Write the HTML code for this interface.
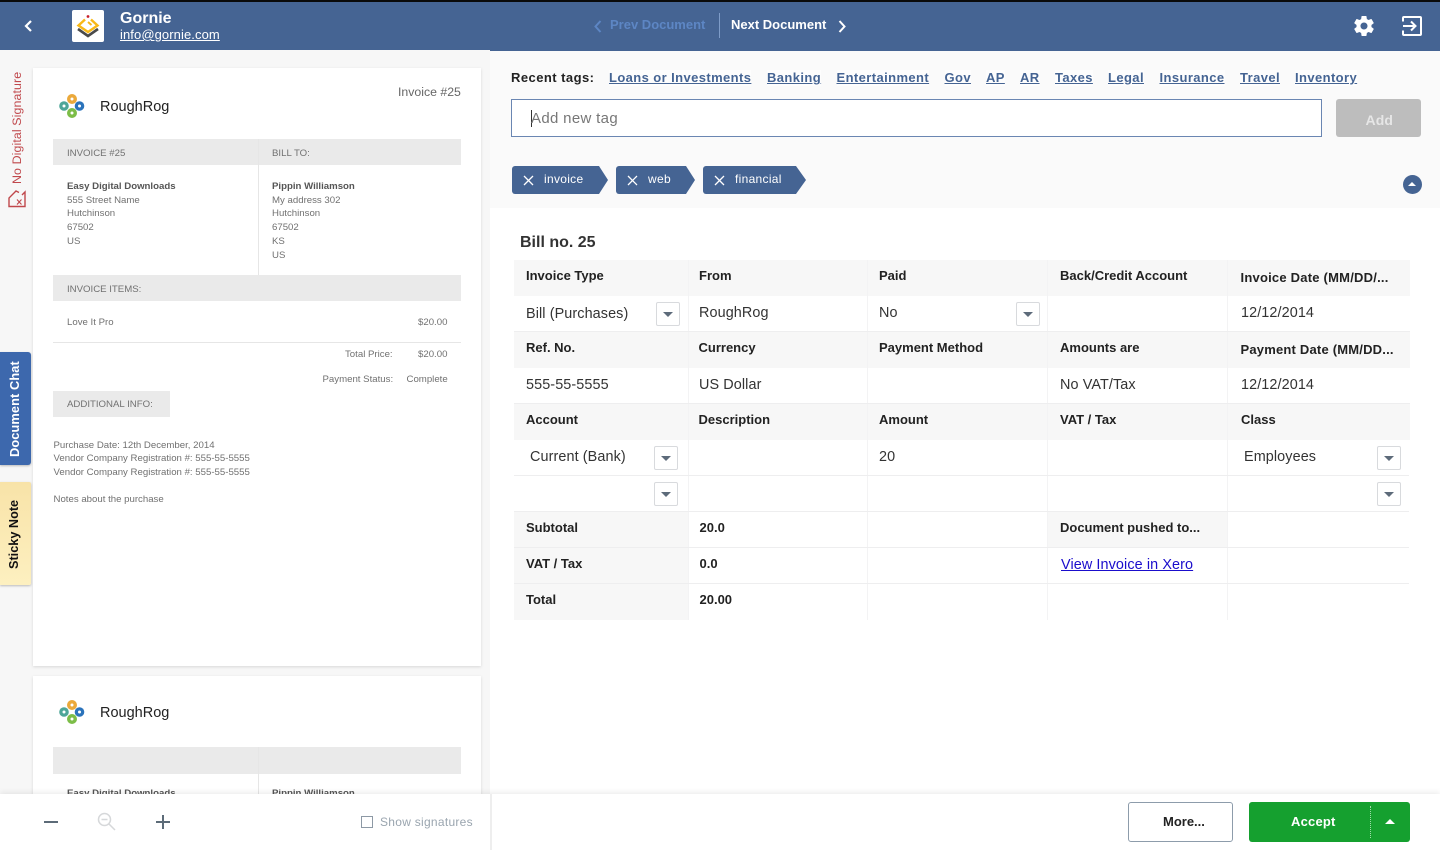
<!DOCTYPE html>
<html><head><meta charset="utf-8"><title>Gornie</title>
<style>
html,body{margin:0;padding:0;width:1440px;height:850px;overflow:hidden;background:#fff;font-family:"Liberation Sans",sans-serif}
div,a,span,svg{position:absolute;white-space:nowrap}
.t{line-height:14px}
.g{background:#eaeaea}
.s{font-size:9.65px;color:#717171;line-height:13.7px}
.s b{color:#555}
.hc{background:#f7f7f7}
.h{font-size:13px;font-weight:bold;color:#222;line-height:16px}
.v{font-size:14.4px;color:#333;line-height:18px;letter-spacing:.1px}
.hl{height:1px;background:#eeeeef}
.vl{width:1px;background:#f3f3f4}
.dd{width:22px;height:22px;border:1px solid #d8dadd;border-radius:2px;background:#fff}
.dd:after{content:"";position:absolute;left:6px;top:9px;border-left:5px solid transparent;border-right:5px solid transparent;border-top:5px solid #5d6b7a}
.rt{font-size:13px;font-weight:bold;color:#456493;text-decoration:underline;top:70px;line-height:16px;letter-spacing:.4px;background:#fdfdfd}
.tag{top:166px;height:28px;background:#456493}
.tag span{color:#fff;font-size:12px;top:6px;line-height:15px;letter-spacing:.3px}
</style></head><body>

<div style="left:0;top:50px;width:490px;height:744px;background:#f7f7f7"></div>
<div style="left:490px;top:50px;width:950px;height:158px;background:#fafafa"></div>

<div style="left:0;top:0;width:1440px;height:51px;background:#456493"></div>
<div style="left:0;top:0;width:1440px;height:2px;background:#0a0a0a"></div>
<div style="left:0;top:50px;width:490px;height:1px;background:#f7f7f7"></div>

<svg style="left:22px;top:19px" width="14" height="14" viewBox="0 0 14 14"><path d="M9 2L4 7l5 5" fill="none" stroke="#fff" stroke-width="2.2"/></svg>

<div style="left:72px;top:10px;width:32px;height:32px;background:#fff;border-radius:2px"></div>
<svg style="left:76px;top:14px" width="24" height="24" viewBox="0 0 24 24">
<circle cx="12" cy="2.5" r="1.4" fill="#c8202a"/>
<path d="M9 5.5L2.5 11.5 12 18l9.500-6.500L15 5.500" fill="none" stroke="#f8b817" stroke-width="2.400"/>
<path d="M12 8l3.500 3" fill="none" stroke="#f8b817" stroke-width="2"/>
<path d="M2 15l10 7 10-7" fill="none" stroke="#4a4a4a" stroke-width="2.600"/>
</svg>
<div class="t" style="left:120px;top:11px;font-size:16px;font-weight:bold;color:#fff;line-height:16px">Gornie</div>
<a style="left:120px;top:27px;font-size:13px;color:#fff;text-decoration:underline;line-height:16px;letter-spacing:.09px">info@gornie.com</a>

<svg style="left:592px;top:19px" width="12" height="14" viewBox="0 0 12 14"><path d="M8.500 2L3.500 7.500 8.500 13" fill="none" stroke="#5d86c4" stroke-width="2"/></svg>
<div style="left:610px;top:17px;font-size:13px;font-weight:bold;color:#5d86c4;line-height:16px">Prev Document</div>
<div style="left:719px;top:13px;width:1px;height:25px;background:#7e9cc8"></div>
<div style="left:731px;top:17px;font-size:13px;font-weight:bold;color:#fff;line-height:16px">Next Document</div>
<svg style="left:836px;top:19px" width="12" height="14" viewBox="0 0 12 14"><path d="M3.500 2L8.500 7.500 3.500 13" fill="none" stroke="#fff" stroke-width="2"/></svg>

<svg style="left:1352px;top:14px" width="24" height="24" viewBox="0 0 24 24"><path fill="#fff" d="M19.430 12.980c.04-.32.070-.64.070-.98s-.03-.66-.07-.98l2.110-1.650c.19-.15.240-.42.120-.64l-2-3.460c-.12-.22-.39-.3-.61-.22l-2.490 1c-.52-.4-1.080-.73-1.690-.98l-.38-2.650C14.460 2.180 14.250 2 14 2h-4c-.25 0-.46.180-.49.420l-.38 2.650c-.61.25-1.170.59-1.690.98l-2.490-1c-.23-.09-.49 0-.61.220l-2 3.460c-.13.220-.07.490.12.640l2.110 1.650c-.04.320-.07.650-.07.980s.03.660.07.980l-2.110 1.650c-.19.150-.24.420-.12.640l2 3.460c.12.220.39.300.61.220l2.490-1c.52.400 1.080.730 1.690.980l.38 2.650c.03.240.24.420.49.420h4c.25 0 .46-.18.490-.42l.38-2.650c.61-.25 1.170-.59 1.690-.98l2.490 1c.23.090.49 0 .61-.22l2-3.460c.12-.22.070-.49-.12-.64l-2.110-1.650zM12 15.500c-1.930 0-3.500-1.570-3.500-3.500s1.570-3.500 3.500-3.500 3.500 1.570 3.500 3.500-1.570 3.500-3.500 3.500z"/></svg>
<svg style="left:1402px;top:16px" width="20" height="20" viewBox="0 0 20 20"><path d="M1 5.500V2a1 1 0 0 1 1-1h16a1 1 0 0 1 1 1v16a1 1 0 0 1-1 1H2a1 1 0 0 1-1-1v-3.500" fill="none" stroke="#fff" stroke-width="2"/><path d="M1 10h12M9 5.500l4.500 4.500L9 14.500" fill="none" stroke="#fff" stroke-width="2"/></svg>

<!-- Left rail -->
<div style="left:10px;top:184px;font-size:12.400px;color:#c0484c;line-height:14px;transform-origin:0 0;transform:rotate(-90deg) translateY(0);letter-spacing:.1px">No Digital Signature</div>
<svg style="left:7px;top:190px" width="20" height="18" viewBox="0 0 20 18"><path d="M12 2.500L9 1 2 8v8.500h16V2l-3 3" fill="none" stroke="#c0484c" stroke-width="1.400"/><path d="M10 9.500l4.500 5M14.500 9.500l-4.500 5" stroke="#c0484c" stroke-width="1.100" fill="none"/></svg>

<div style="left:0;top:352px;width:31px;height:113px;background:#3d68ad;border-radius:0 3px 3px 0;box-shadow:0 1px 2px rgba(0,0,0,.25)"></div>
<div style="left:7px;top:457px;font-size:12.800px;font-weight:bold;color:#fff;line-height:15px;transform-origin:0 0;transform:rotate(-90deg);letter-spacing:.1px">Document Chat</div>
<div style="left:0;top:482px;width:31px;height:103px;background:linear-gradient(#f8e3a8,#fdf0c0);border-radius:0 2px 2px 0;box-shadow:0 1px 2px rgba(0,0,0,.25)"></div>
<div style="left:7px;top:569px;font-size:12.700px;font-weight:bold;color:#111;line-height:15px;transform-origin:0 0;transform:rotate(-90deg)">Sticky Note</div>

<!-- Invoice page 1 -->
<div style="left:33px;top:68px;width:448px;height:598px;background:#fff;box-shadow:0 1px 3px rgba(0,0,0,.13)"></div>
<svg style="left:59px;top:94px" width="27" height="25" viewBox="0 0 27 25">
<circle cx="13" cy="5" r="5" fill="#eba93b"/><circle cx="13" cy="5" r="1.500" fill="#fff"/>
<circle cx="5" cy="12" r="4.800" fill="#4ea698"/><circle cx="5" cy="12" r="1.500" fill="#fff"/>
<circle cx="20.500" cy="12" r="4.800" fill="#2b73bb"/><circle cx="20.500" cy="12" r="1.500" fill="#fff"/>
<circle cx="13" cy="19" r="5" fill="#7cbd48"/><circle cx="13" cy="19" r="1.500" fill="#fff"/>
</svg>
<div style="left:100px;top:99px;font-size:14.500px;color:#222;line-height:17px">RoughRog</div>
<div style="left:398px;top:85px;font-size:12.300px;color:#666;line-height:14px">Invoice #25</div>

<div class="g" style="left:53px;top:139px;width:408px;height:26px"></div>
<div style="left:258px;top:139px;width:1px;height:136px;background:#e6e6e6"></div>
<div class="s" style="left:67px;top:147px">INVOICE #25</div>
<div class="s" style="left:272px;top:147px">BILL TO:</div>
<div class="s" style="left:67px;top:180px"><b>Easy Digital Downloads</b><br>555 Street Name<br>Hutchinson<br>67502<br>US</div>
<div class="s" style="left:272px;top:180px"><b>Pippin Williamson</b><br>My address 302<br>Hutchinson<br>67502<br>KS<br>US</div>

<div class="g" style="left:53px;top:275px;width:408px;height:26px"></div>
<div class="s" style="left:67px;top:283px">INVOICE ITEMS:</div>
<div class="s" style="left:67px;top:316px">Love It Pro</div>
<div class="s" style="left:418px;top:316px">$20.00</div>
<div style="left:53px;top:342px;width:408px;height:1px;background:#e6e6e6"></div>
<div class="s" style="left:345px;top:348px">Total Price:</div>
<div class="s" style="left:418px;top:348px">$20.00</div>
<div class="s" style="left:322.500px;top:373px">Payment Status:</div>
<div class="s" style="left:406.500px;top:373px">Complete</div>

<div class="g" style="left:53px;top:391px;width:117px;height:26px"></div>
<div class="s" style="left:67px;top:398px">ADDITIONAL INFO:</div>
<div class="s" style="left:53.500px;top:438.500px">Purchase Date: 12th December, 2014<br>Vendor Company Registration #: 555-55-5555<br>Vendor Company Registration #: 555-55-5555</div>
<div class="s" style="left:53.500px;top:493px">Notes about the purchase</div>

<!-- Invoice page 2 -->
<div style="left:33px;top:676px;width:448px;height:130px;background:#fff;box-shadow:0 1px 3px rgba(0,0,0,.13)"></div>
<svg style="left:59px;top:700px" width="27" height="25" viewBox="0 0 27 25">
<circle cx="13" cy="5" r="5" fill="#eba93b"/><circle cx="13" cy="5" r="1.500" fill="#fff"/>
<circle cx="5" cy="12" r="4.800" fill="#4ea698"/><circle cx="5" cy="12" r="1.500" fill="#fff"/>
<circle cx="20.500" cy="12" r="4.800" fill="#2b73bb"/><circle cx="20.500" cy="12" r="1.500" fill="#fff"/>
<circle cx="13" cy="19" r="5" fill="#7cbd48"/><circle cx="13" cy="19" r="1.500" fill="#fff"/>
</svg>
<div style="left:100px;top:705px;font-size:14.500px;color:#222;line-height:17px">RoughRog</div>
<div class="g" style="left:53px;top:747px;width:408px;height:27px"></div>
<div style="left:258px;top:747px;width:1px;height:50px;background:#e6e6e6"></div>
<div class="s" style="left:67px;top:787px"><b>Easy Digital Downloads</b></div>
<div class="s" style="left:272px;top:787px"><b>Pippin Williamson</b></div>

<!-- Tags -->
<div style="left:511px;top:70px;font-size:13px;font-weight:bold;color:#222;line-height:16px;letter-spacing:.45px">Recent tags:</div>
<a class="rt" style="left:609px">Loans or Investments</a>
<a class="rt" style="left:767px">Banking</a>
<a class="rt" style="left:836.500px">Entertainment</a>
<a class="rt" style="left:944.500px">Gov</a>
<a class="rt" style="left:986px">AP</a>
<a class="rt" style="left:1020px">AR</a>
<a class="rt" style="left:1055px">Taxes</a>
<a class="rt" style="left:1108px">Legal</a>
<a class="rt" style="left:1159.500px">Insurance</a>
<a class="rt" style="left:1240px">Travel</a>
<a class="rt" style="left:1295px">Inventory</a>

<div style="left:511px;top:99px;width:809px;height:36px;background:#fff;border:1px solid #6a86b2"></div>
<div style="left:531px;top:110px;width:1px;height:17px;background:#333"></div>
<div style="left:531px;top:110px;font-size:15px;color:#777;line-height:18px;letter-spacing:.33px">Add new tag</div>
<div style="left:1336px;top:99px;width:85px;height:38px;background:#bdbdbd;border-radius:3px"></div>
<div style="left:1365.500px;top:112px;font-size:14px;font-weight:bold;color:#e6e6e6;line-height:16px;letter-spacing:.1px">Add</div>

<div class="tag" style="left:512px;width:96px;clip-path:polygon(0 0,87px 0,96px 14px,87px 28px,0 28px);border-radius:3px 0 0 3px"><svg style="left:10.500px;top:8.500px" width="11" height="11" viewBox="0 0 11 11"><path d="M1 1l9 9M10 1l-9 9" stroke="#fff" stroke-width="1.300"/></svg><span style="left:32px">invoice</span></div>
<div class="tag" style="left:616px;width:79px;clip-path:polygon(0 0,70px 0,79px 14px,70px 28px,0 28px);border-radius:3px 0 0 3px"><svg style="left:10.500px;top:8.500px" width="11" height="11" viewBox="0 0 11 11"><path d="M1 1l9 9M10 1l-9 9" stroke="#fff" stroke-width="1.300"/></svg><span style="left:32px">web</span></div>
<div class="tag" style="left:703px;width:103px;clip-path:polygon(0 0,93px 0,103px 14px,93px 28px,0 28px);border-radius:3px 0 0 3px"><svg style="left:10.500px;top:8.500px" width="11" height="11" viewBox="0 0 11 11"><path d="M1 1l9 9M10 1l-9 9" stroke="#fff" stroke-width="1.300"/></svg><span style="left:32px">financial</span></div>

<div style="left:1403px;top:175px;width:19px;height:19px;border-radius:50%;background:#456493"></div>
<div style="left:1408px;top:182px;width:0;height:0;border-left:4px solid transparent;border-right:4px solid transparent;border-bottom:4px solid #fff"></div>

<!-- Table -->
<div style="left:520px;top:233px;font-size:16px;font-weight:bold;color:#333;line-height:19px">Bill no. 25</div>

<div class="hc" style="left:514px;top:260px;width:896px;height:36px"></div>
<div class="hc" style="left:514px;top:332px;width:896px;height:36px"></div>
<div class="hc" style="left:514px;top:404px;width:896px;height:36px"></div>
<div class="hc" style="left:514px;top:512px;width:174px;height:108px"></div>
<div class="hc" style="left:1048px;top:512px;width:180px;height:36px"></div>

<div class="vl" style="left:688px;top:260px;height:360px"></div>
<div class="vl" style="left:867px;top:260px;height:360px"></div>
<div class="vl" style="left:1047px;top:260px;height:360px"></div>
<div class="vl" style="left:1227px;top:260px;height:360px"></div>

<div class="hl" style="left:514px;top:331px;width:896px"></div>
<div class="hl" style="left:514px;top:403px;width:896px"></div>
<div class="hl" style="left:514px;top:475px;width:895px"></div>
<div class="hl" style="left:514px;top:511px;width:895px"></div>
<div class="hl" style="left:514px;top:547px;width:895px"></div>
<div class="hl" style="left:514px;top:583px;width:895px"></div>

<div class="h" style="left:526px;top:268px">Invoice Type</div>
<div class="h" style="left:699px;top:268px">From</div>
<div class="h" style="left:879px;top:268px">Paid</div>
<div class="h" style="left:1060px;top:268px">Back/Credit Account</div>
<div class="h" style="left:1240.500px;top:270px;letter-spacing:.22px">Invoice Date (MM/DD/...</div>

<div class="v" style="left:526px;top:305px">Bill (Purchases)</div>
<div class="dd" style="left:656px;top:302px"></div>
<div class="v" style="left:699px;top:304px">RoughRog</div>
<div class="v" style="left:879px;top:304px">No</div>
<div class="dd" style="left:1016px;top:302px"></div>
<div class="v" style="left:1241px;top:304px">12/12/2014</div>

<div class="h" style="left:526px;top:340px">Ref. No.</div>
<div class="h" style="left:698.500px;top:340px">Currency</div>
<div class="h" style="left:879px;top:340px">Payment Method</div>
<div class="h" style="left:1060px;top:340px">Amounts are</div>
<div class="h" style="left:1240.500px;top:342px;letter-spacing:.2px">Payment Date (MM/DD...</div>

<div class="v" style="left:526px;top:376px">555-55-5555</div>
<div class="v" style="left:699px;top:376px">US Dollar</div>
<div class="v" style="left:1060px;top:376px">No VAT/Tax</div>
<div class="v" style="left:1241px;top:376px">12/12/2014</div>

<div class="h" style="left:526px;top:412px">Account</div>
<div class="h" style="left:698.500px;top:412px">Description</div>
<div class="h" style="left:879px;top:412px">Amount</div>
<div class="h" style="left:1060px;top:412px">VAT / Tax</div>
<div class="h" style="left:1241px;top:412px">Class</div>

<div class="v" style="left:530px;top:448px">Current (Bank)</div>
<div class="dd" style="left:654px;top:446px"></div>
<div class="v" style="left:879px;top:448px">20</div>
<div class="v" style="left:1244px;top:448px">Employees</div>
<div class="dd" style="left:1377px;top:446px"></div>
<div class="dd" style="left:654px;top:482px"></div>
<div class="dd" style="left:1377px;top:482px"></div>

<div class="h" style="left:526px;top:520px">Subtotal</div>
<div class="h" style="left:699.500px;top:520px">20.0</div>
<div class="h" style="left:1060px;top:520px">Document pushed to...</div>
<div class="h" style="left:526px;top:556px">VAT / Tax</div>
<div class="h" style="left:699.500px;top:556px">0.0</div>
<a style="left:1061px;top:556px;font-size:14.400px;color:#1a0dcc;text-decoration:underline;line-height:18px;letter-spacing:.1px">View Invoice in Xero</a>
<div class="h" style="left:526px;top:592px">Total</div>
<div class="h" style="left:699.500px;top:592px">20.00</div>

<!-- Footer -->
<div style="left:0;top:794px;width:1440px;height:56px;background:#fff;box-shadow:0 -2px 5px rgba(0,0,0,.07)"></div>
<div style="left:490px;top:794px;width:2px;height:56px;background:#eeeeee"></div>
<div style="left:44px;top:821px;width:14px;height:2px;background:#5c6b78"></div>
<svg style="left:97px;top:812px" width="20" height="20" viewBox="0 0 20 20"><circle cx="7.500" cy="7.500" r="6" fill="none" stroke="#d6d8da" stroke-width="1.500"/><path d="M4.500 7.500h6M12 12l6 6" stroke="#d6d8da" stroke-width="1.500" fill="none"/></svg>
<div style="left:156px;top:821px;width:14px;height:2px;background:#5c6b78"></div>
<div style="left:162px;top:815px;width:2px;height:14px;background:#5c6b78"></div>
<div style="left:361px;top:816px;width:10px;height:10px;border:1px solid #8d99a5;background:#fff"></div>
<div style="left:380px;top:814px;font-size:12px;color:#9aa5af;line-height:16px;letter-spacing:.28px">Show signatures</div>

<div style="left:1128px;top:802px;width:103px;height:38px;border:1px solid #8d9cab;border-radius:3px;background:#fff"></div>
<div style="left:1163px;top:814px;font-size:13px;font-weight:bold;color:#222;line-height:16px">More...</div>
<div style="left:1249px;top:802px;width:161px;height:40px;background:#15a02f;border-radius:3px"></div>
<div style="left:1291px;top:814px;font-size:13px;font-weight:bold;color:#fff;line-height:16px;letter-spacing:.2px">Accept</div>
<div style="left:1370px;top:806px;height:32px;border-left:1px dotted #9fdcaa"></div>
<div style="left:1385px;top:819px;width:0;height:0;border-left:5px solid transparent;border-right:5px solid transparent;border-bottom:5px solid #fff"></div>

</body></html>
